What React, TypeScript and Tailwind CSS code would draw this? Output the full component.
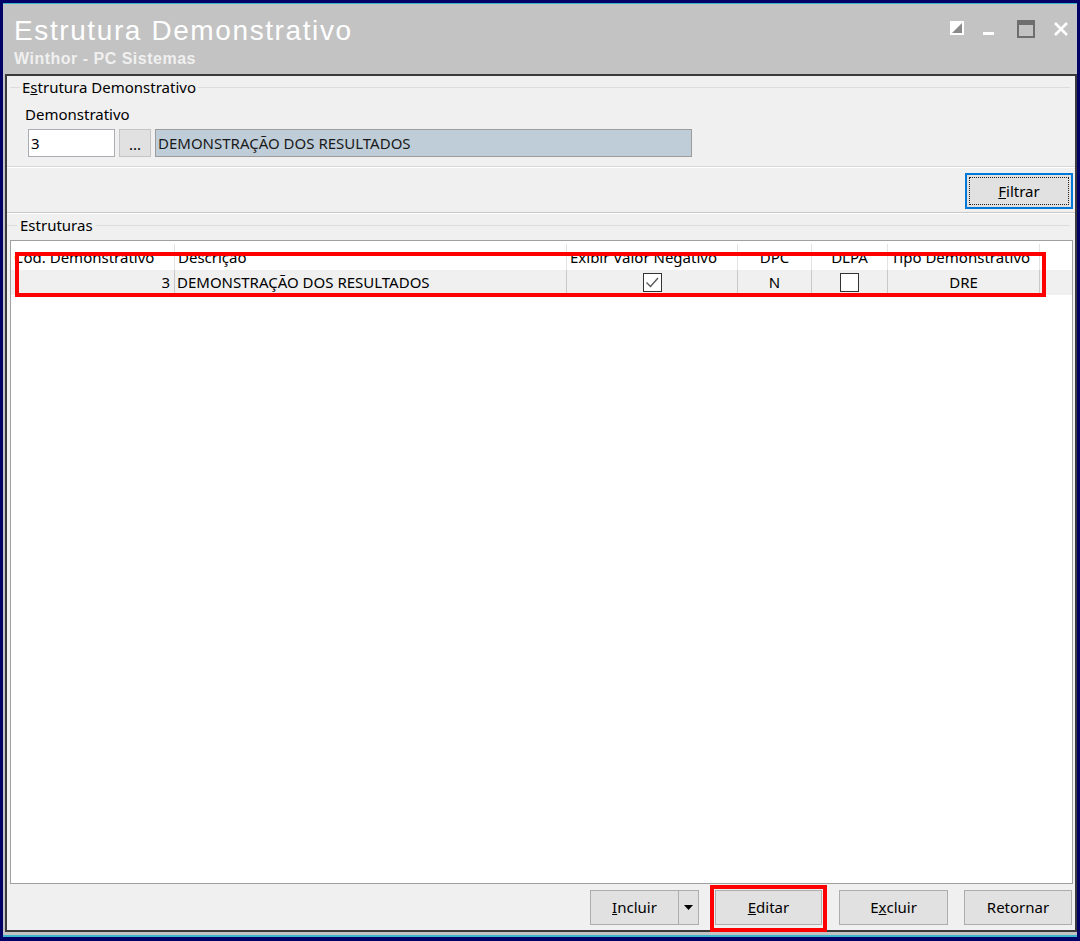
import React from 'react';

const ui = { fontFamily: '"Noto Sans", "Open Sans", sans-serif' };
const caption = { fontFamily: '"Liberation Sans", Arial, sans-serif' };

// Window caption buttons
const RestoreIcon = () => (
  <svg width="16" height="16" viewBox="0 0 16 16">
    <rect x="1" y="1" width="14" height="14" fill="#ffffff" />
    <polygon points="13,3 13,13 3,13" fill="#8a8a8a" />
  </svg>
);

const MinimizeIcon = () => (
  <svg width="16" height="18" viewBox="0 0 16 18">
    <rect x="2" y="14" width="11" height="3" fill="#ffffff" />
  </svg>
);

const MaximizeIcon = () => (
  <svg width="18" height="18" viewBox="0 0 18 18">
    <rect x="1" y="1" width="16" height="16" fill="none" stroke="#6e6e6e" strokeWidth="2" />
    <rect x="1" y="1" width="16" height="4" fill="#6e6e6e" />
  </svg>
);

const CloseIcon = () => (
  <svg width="16" height="16" viewBox="0 0 16 16">
    <path d="M2 2 L14 14 M14 2 L2 14" stroke="#ffffff" strokeWidth="2.6" />
  </svg>
);

const CheckBox = ({ checked }: { checked?: boolean }) => (
  <svg width="19" height="19" viewBox="0 0 19 19">
    <rect x="0.5" y="0.5" width="18" height="18" fill="#ffffff" stroke="#333333" />
    {checked && <path d="M3.5 9.5 L7.5 13.5 L15 5" fill="none" stroke="#555555" strokeWidth="1.3" />}
  </svg>
);

const Legend = ({ children, pad }: { children: React.ReactNode; pad: string }) => (
  <div className={`h-[22px] flex items-center ${pad}`}>
    <div className="w-[10px] border-t border-[#dcdcdc]" />
    <span className="px-[2px] text-[15px] leading-[22px] text-black">{children}</span>
    <div className="flex-1 mr-[5px] border-t border-[#dcdcdc]" />
  </div>
);

const Button = ({ children, width }: { children: React.ReactNode; width: string }) => (
  <button
    className={`h-[35px] ${width} bg-[#e1e1e1] border border-[#adadad] text-[15px] text-black flex items-center justify-center`}
  >
    {children}
  </button>
);

const columns = [
  { title: 'Cód. Demonstrativo', w: 'w-[164px]', align: 'text-left' },
  { title: 'Descrição', w: 'w-[392px]', align: 'text-left' },
  { title: 'Exibir Valor Negativo', w: 'w-[171px]', align: 'text-left' },
  { title: 'DPC', w: 'w-[74px]', align: 'text-center' },
  { title: 'DLPA', w: 'w-[76px]', align: 'text-center' },
  { title: 'Tipo Demonstrativo', w: 'w-[152px]', align: 'text-left' },
];

export default function App() {
  return (
    <div className="w-[1080px] h-[941px] bg-[#000066] pt-[3px] pl-[3px] overflow-hidden" style={ui}>
      <div className="w-[1074px] h-[934px] bg-[#c3c3c3] border-t border-b-2 border-[#3bb4cc] flex flex-col">
        {/* caption */}
        <div className="h-[70px] flex items-start justify-between pl-[11px] pr-[8px]" style={caption}>
          <div className="pt-[11px]">
            <div className="text-[28px] leading-[32px] text-white tracking-[1.6px]">Estrutura Demonstrativo</div>
            <div className="mt-[3px] text-[16px] leading-[18px] font-bold text-[#f0f0f0] tracking-[0.5px]">
              Winthor - PC Sistemas
            </div>
          </div>
          <div className="flex items-start pt-[16px]">
            <RestoreIcon />
            <div className="ml-[16px] -mt-[2px]">
              <MinimizeIcon />
            </div>
            <div className="ml-[20px]">
              <MaximizeIcon />
            </div>
            <div className="ml-[18px] mt-[1px]">
              <CloseIcon />
            </div>
          </div>
        </div>

        {/* client area */}
        <div className="flex-1 ml-[2px] mb-[3px] border-2 border-[#3a3a3a] bg-[#f0f0f0] flex flex-col">
          <Legend pad="pl-[3px]">
            E<span className="underline">s</span>trutura Demonstrativo
          </Legend>
          <div className="mt-[5px] h-[22px] pl-[18px] text-[15px] leading-[22px] text-black">Demonstrativo</div>
          <div className="mt-[4px] h-[28px] pl-[21px] flex gap-[4px]">
            <div className="w-[87px] h-full bg-white border border-[#abadb3] px-[2px] text-[15px] leading-[26px] text-black">
              3
            </div>
            <div className="w-[32px] h-full bg-[#e1e1e1] border border-[#c4c4c4] text-[15px] leading-[28px] text-center text-black">
              ...
            </div>
            <div className="w-[537px] h-full bg-[#bfcdd9] border border-[#9c9c9c] px-[2px] text-[15px] leading-[26px] text-[#1a1a1a]">
              DEMONSTRAÇÃO DOS RESULTADOS
            </div>
          </div>
          <div className="mt-[9px] border-t border-b border-t-[#d8d8d8] border-b-white" />

          <div className="h-[44px] flex justify-end items-start pt-[5px] pr-[2px]">
            <button className="w-[108px] h-[36px] bg-[#e1e1e1] border-2 border-[#0078d7] p-[2px]">
              <span className="w-full h-full border border-dotted border-[#222222] flex items-center justify-center text-[15px] text-black">
                <span className="underline">F</span>iltrar
              </span>
            </button>
          </div>
          <div className="border-t border-b border-t-[#c8c8c8] border-b-white" />

          <Legend pad="pl-0">
            <span className="pl-[1px]">Estruturas</span>
          </Legend>

          {/* grid */}
          <div className="relative flex-1 mt-[4px] ml-[3px] mr-[2px] bg-white border border-[#a0a0a0]">
            <div className="flex h-[29px] pt-[3px]">
              {columns.map((c) => (
                <div
                  key={c.title}
                  className={`${c.w} ${c.align} border-r border-[#e3e3e3] px-[3px] text-[15px] leading-[26px] text-black whitespace-nowrap overflow-hidden`}
                >
                  {c.title}
                </div>
              ))}
            </div>
            <div className="flex h-[25px] bg-[#f0f0f0] text-[15px] leading-[25px] text-black">
              <div className="w-[164px] border-r border-[#c8c8c8] px-[4px] text-right">3</div>
              <div className="w-[392px] border-r border-[#c8c8c8] px-[2px]">DEMONSTRAÇÃO DOS RESULTADOS</div>
              <div className="w-[171px] border-r border-[#c8c8c8] flex items-center justify-center">
                <CheckBox checked />
              </div>
              <div className="w-[74px] border-r border-[#c8c8c8] text-center">N</div>
              <div className="w-[76px] border-r border-[#c8c8c8] flex items-center justify-center">
                <CheckBox />
              </div>
              <div className="w-[152px] border-r border-[#c8c8c8] text-center">DRE</div>
            </div>
            {/* highlight around the record */}
            <div className="absolute left-[4px] top-[11px] w-[1031px] h-[45px] border-4 border-[#ff0000] pointer-events-none" />
          </div>

          {/* command bar */}
          <div className="h-[46px] pt-[6px] pr-[3px] flex justify-end items-start gap-4">
            <div className="flex">
              <Button width="w-[89px]">
                <span className="underline">I</span>ncluir
              </Button>
              <button className="w-[20px] h-[35px] bg-[#e1e1e1] border border-l-0 border-[#adadad] flex items-center justify-center">
                <svg width="9" height="5" viewBox="0 0 9 5">
                  <polygon points="0,0 9,0 4.5,5" fill="#000000" />
                </svg>
              </button>
            </div>
            <div className="relative">
              <Button width="w-[107px]">
                <span className="underline">E</span>ditar
              </Button>
              <div className="absolute -left-[5px] -right-[5px] -top-[5px] -bottom-[7px] border-4 border-[#ff0000] pointer-events-none" />
            </div>
            <div className="ml-[1px]">
              <Button width="w-[109px]">
                E<span className="underline">x</span>cluir
              </Button>
            </div>
            <Button width="w-[108px]">Retornar</Button>
          </div>
        </div>
      </div>
    </div>
  );
}
